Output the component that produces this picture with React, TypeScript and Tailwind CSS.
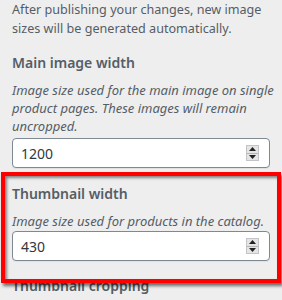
import React from 'react';

function Spinner() {
  return (
    <span className="flex flex-col w-[13px] h-[16px] border border-[#c3c4c7] bg-[#e5e5e5]">
      <span className="flex-1 flex items-center justify-center border-b border-[#b5b5b5]">
        <svg width="7" height="4" viewBox="0 0 7 4">
          <path d="M3.5 0 L7 4 L0 4 Z" fill="#222" />
        </svg>
      </span>
      <span className="flex-1 flex items-center justify-center">
        <svg width="7" height="4" viewBox="0 0 7 4">
          <path d="M0 0 L7 0 L3.5 4 Z" fill="#222" />
        </svg>
      </span>
    </span>
  );
}

function NumberField({ value }: { value: string }) {
  return (
    <div className="flex items-center h-[30px] w-[258px] rounded-[4px] border border-[#7e8993] bg-white pl-[8px] pr-[10px] shadow-[0_1px_0_rgba(0,0,0,0.05)]">
      <span className="flex-1 text-[14px] text-[#32373c]">{value}</span>
      <Spinner />
    </div>
  );
}

export default function App() {
  return (
    <div
      className="relative w-[282px] h-[300px] overflow-hidden bg-[#eeeeee] text-[#555d66]"
      style={{ fontFamily: '"Segoe UI", "Noto Sans", Arial, sans-serif' }}
    >
      <div className="pl-[12px] pr-[12px] whitespace-nowrap">
        <p className="text-[12.6px] leading-[19px]">
          After publishing your changes, new image
          <br />
          sizes will be generated automatically.
        </p>

        <div className="mt-[15px] text-[14px] font-semibold leading-[20px]">Main image width</div>
        <p className="mt-[8px] text-[13px] italic leading-[18px]">
          Image size used for the main image on single
          <br />
          product pages. These images will remain
          <br />
          uncropped.
        </p>
        <div className="mt-[3px]">
          <NumberField value="1200" />
        </div>

        <div className="mt-[16px] text-[14px] font-semibold leading-[20px]">Thumbnail width</div>
        <p className="mt-[8px] text-[13px] italic leading-[18px]">
          Image size used for products in the catalog.
        </p>
        <div className="mt-[1px]">
          <NumberField value="430" />
        </div>

        <div className="mt-[15px] text-[14px] font-semibold leading-[20px]">Thumbnail cropping</div>
      </div>

      <div className="absolute left-[1px] top-[172px] w-[280px] h-[111px] border-[4px] border-[#ff0000] shadow-[2px_3px_3px_rgba(0,0,0,0.55),inset_2px_2px_3px_rgba(0,0,0,0.45)]" />
    </div>
  );
}
